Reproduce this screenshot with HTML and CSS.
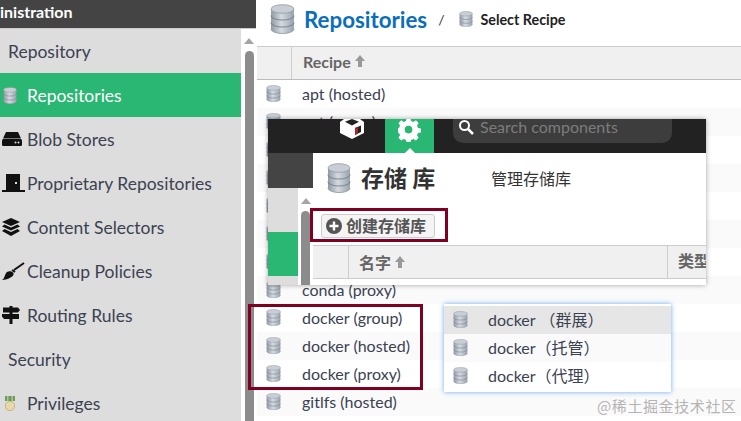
FILE: index.html
```html
<!DOCTYPE html>
<html lang="en">
<head>
<meta charset="utf-8">
<title>Repositories</title>
<link rel="stylesheet" href="styles.css">
</head>
<body>
<svg class="defs" width="0" height="0" aria-hidden="true">
  <defs>
    <linearGradient id="dbg" x1="0" y1="0" x2="1" y2="0">
      <stop offset="0" stop-color="#8f99a5"/>
      <stop offset=".45" stop-color="#d5dae0"/>
      <stop offset="1" stop-color="#98a2ad"/>
    </linearGradient>
    <symbol id="db" viewBox="0 0 24 30" preserveAspectRatio="none">
      <path d="M1 5v20c0 2.500 5 4.500 11 4.500s11-2 11-4.500V5z" fill="url(#dbg)"/>
      <ellipse cx="12" cy="5" rx="11" ry="4.300" fill="#c9ced5" stroke="#8f99a5" stroke-width=".8"/>
      <path d="M1 11.500c0 2.500 5 4.500 11 4.500s11-2 11-4.500M1 18.500c0 2.500 5 4.500 11 4.500s11-2 11-4.500" fill="none" stroke="#7f8994" stroke-width="1.100"/>
      <path d="M1 25c0 2.500 5 4.500 11 4.500s11-2 11-4.500" fill="none" stroke="#8d969f" stroke-width=".8"/>
    </symbol>
    <symbol id="up" viewBox="0 0 10 12">
      <path d="M5 0l5 6H7v6H3V6H0z" fill="#999"/>
    </symbol>
  </defs>
</svg>

<div class="app">
  <aside class="side">
    <div class="side-title">inistration</div>
    <div class="side-body">
      <nav class="menu">
        <div class="menu-item group">Repository</div>
        <div class="menu-item active"><svg class="mi-icon db-i"><use href="#db"/></svg>Repositories</div>
        <div class="menu-item"><svg class="mi-icon blob" viewBox="0 0 20 14"><path d="M4 0h12l3 6.500H1z" fill="#111"/><rect x="0" y="7" width="20" height="7" rx="1.500" fill="#111"/><circle cx="13.500" cy="10.500" r="1" fill="#ddd"/><circle cx="16.500" cy="10.500" r="1" fill="#ddd"/></svg>Blob Stores</div>
        <div class="menu-item"><svg class="mi-icon door" viewBox="0 0 23 18"><path d="M4 0h14v16H4z" fill="#111"/><rect x="0" y="16" width="23" height="2" fill="#111"/><rect x="13" y="8" width="2" height="2" fill="#ddd"/></svg>Proprietary Repositories</div>
        <div class="menu-item"><svg class="mi-icon" viewBox="0 0 18 18"><path d="M9 0l9 4-9 4-9-4z" fill="#111"/><path d="M2.500 6.500L9 9.500l6.500-3L18 8.500l-9 4-9-4z" fill="#111"/><path d="M2.500 11L9 14l6.500-3 2.500 2-9 5-9-5z" fill="#111"/></svg>Content Selectors</div>
        <div class="menu-item"><svg class="mi-icon wide" viewBox="0 0 23 18"><path d="M0 18c3-1.500 2.500-6 5-8 2-1.500 5-1 6.500 1 .5 2-1 3.500-3 4.500-2 1.500-5 2.500-8.500 2.500z" fill="#111"/><path d="M10 8l3 2" stroke="#111" stroke-width="2"/><path d="M12 8l10-7" stroke="#111" stroke-width="2" fill="none"/></svg>Cleanup Policies</div>
        <div class="menu-item"><svg class="mi-icon" viewBox="0 0 18 18"><rect x="7.500" y="0" width="3" height="18" fill="#111"/><path d="M1 1.500h15l2 2.500-2 2.500H1z" fill="#111"/><path d="M0 8h17v5H2l-2-2.500z" fill="#111"/></svg>Routing Rules</div>
        <div class="menu-item group">Security</div>
        <div class="menu-item"><svg class="mi-icon medal" viewBox="0 0 10 15"><path d="M0 0h10v5H0z" fill="#6f9a5c"/><path d="M2 0h1.500v5H2zM6.500 0H8v5H6.500z" fill="#a9c99a"/><circle cx="5" cy="10" r="4.700" fill="#e8d9a8" stroke="#b7a36b" stroke-width=".7"/></svg>Privileges</div>
      </nav>
      <div class="scroll">
        <span class="scroll-up"></span>
        <span class="scroll-thumb"></span>
      </div>
    </div>
  </aside>

  <main class="main">
    <header class="head">
      <svg class="head-icon"><use href="#db"/></svg>
      <h1 class="head-title">Repositories</h1>
      <span class="crumb-sep">/</span>
      <svg class="crumb-icon"><use href="#db"/></svg>
      <span class="crumb">Select Recipe</span>
    </header>
    <div class="thead">
      <div class="th-blank"></div>
      <div class="th">Recipe<svg class="arrow"><use href="#up"/></svg></div>
    </div>
    <div class="rows">
      <div class="row"><svg class="r-icon"><use href="#db"/></svg>apt (hosted)</div>
      <div class="row"><svg class="r-icon"><use href="#db"/></svg>apt (proxy)</div>
      <div class="row"><svg class="r-icon"><use href="#db"/></svg></div>
      <div class="row"><svg class="r-icon"><use href="#db"/></svg></div>
      <div class="row"><svg class="r-icon"><use href="#db"/></svg></div>
      <div class="row"><svg class="r-icon"><use href="#db"/></svg></div>
      <div class="row"><svg class="r-icon"><use href="#db"/></svg></div>
      <div class="row"><svg class="r-icon"><use href="#db"/></svg>conda (proxy)</div>
      <div class="row"><svg class="r-icon"><use href="#db"/></svg>docker (group)</div>
      <div class="row"><svg class="r-icon"><use href="#db"/></svg>docker (hosted)</div>
      <div class="row"><svg class="r-icon"><use href="#db"/></svg>docker (proxy)</div>
      <div class="row"><svg class="r-icon"><use href="#db"/></svg>gitlfs (hosted)</div>
    </div>
  </main>
</div>

<section class="shot">
  <div class="shot-top">
    <svg class="cube" viewBox="0 0 26 20"><path d="M1 3l4-3h16l4 3v11l-12 6-12-6z" fill="#fff"/><path d="M6 2.800L13 0l7 2.800-7 3.700z" fill="#222"/><path d="M16 9l6-2.500V13l-6 3z" fill="#222"/><path d="M16 9l3-1.300v6.800l-3 1.500z" fill="#a3262a"/></svg>
    <div class="gear-tab">
      <svg class="gear" viewBox="0 0 24 24"><path fill="#fff" fill-rule="evenodd" d="M10 1h4l.6 3 2.500 1 2.600-1.600 2.800 2.800L20.900 8.800l1 2.500 3 .7v4l-3 .6-1 2.400 1.600 2.600-2.800 2.800-2.600-1.600-2.500 1-.6 3h-4l-.6-3-2.500-1-2.600 1.600-2.800-2.800 1.600-2.600-1-2.400-3-.6v-4l3-.7 1-2.500-1.600-2.600 2.800-2.800L6.900 5l2.500-1zM12 9a4 4 0 1 0 0 8 4 4 0 0 0 0-8z" transform="translate(-1 -2)"/></svg>
      <span class="gear-tip"></span>
    </div>
    <div class="search">
      <svg class="search-icon" viewBox="0 0 16 16"><circle cx="6.500" cy="6.500" r="4.500" fill="none" stroke="#fff" stroke-width="2"/><path d="M10 10l5 5" stroke="#fff" stroke-width="2.500"/></svg>
      <span>Search components</span>
    </div>
  </div>
  <div class="shot-body">
    <div class="shot-side">
      <div class="ss-title"></div>
      <div class="ss-body">
        <div class="ss-menu">
          <div class="ss-item"></div>
          <div class="ss-item on"></div>
          <div class="ss-item"></div>
        </div>
        <div class="ss-scroll">
          <span class="scroll-up"></span>
          <span class="ss-thumb"></span>
        </div>
      </div>
    </div>
    <div class="shot-main">
      <div class="shot-head">
        <svg class="shot-icon"><use href="#db"/></svg>
        <span class="shot-title">存储 库</span>
        <span class="shot-sub">管理存储库</span>
      </div>
      <div class="shot-tools">
        <button class="create" type="button"><svg class="plus" viewBox="0 0 16 16"><circle cx="8" cy="8" r="8" fill="#555"/><path d="M8 3.500v9M3.500 8h9" stroke="#fff" stroke-width="2.400"/></svg><span class="create-label">创建存储库</span></button>
      </div>
      <div class="shot-thead">
        <div class="st-blank"></div>
        <div class="st-name">名字<svg class="arrow"><use href="#up"/></svg></div>
        <div class="st-type">类型</div>
      </div>
    </div>
  </div>
  <span class="mark mark-a"></span>
</section>

<span class="mark mark-b"></span>

<div class="mini">
  <div class="mini-row sel"><svg class="r-icon"><use href="#db"/></svg>docker （群展）</div>
  <div class="mini-row alt"><svg class="r-icon"><use href="#db"/></svg>docker（托管）</div>
  <div class="mini-row"><svg class="r-icon"><use href="#db"/></svg>docker（代理）</div>
</div>

<div class="water">@稀土掘金技术社区</div>
</body>
</html>
```

FILE: styles.css
```css
* { box-sizing: border-box; }
html, body { margin: 0; padding: 0; }
body {
  width: 741px;
  height: 421px;
  overflow: hidden;
  position: relative;
  background: #fff;
  font-family: Lato, "Noto Sans CJK SC", sans-serif;
  color: #3b4252;
}
.defs { position: absolute; }

.app { display: flex; height: 421px; }

/* left admin menu */
.side { width: 256px; flex: none; display: flex; flex-direction: column; }
.side-title {
  height: 28px;
  background: #444;
  color: #fff;
  font-weight: 700;
  font-size: 16px;
  line-height: 23px;
  flex: none;
}
.side-body { flex: 1; display: flex; border-top: 1px solid #ccc; min-height: 0; }
.menu { width: 241px; background: #ddd; flex: none; }
.menu-item {
  height: 44px;
  display: flex;
  align-items: center;
  font-size: 17.500px;
  white-space: nowrap;
  padding: 0 0 0 27px;
  position: relative;
}
.menu-item.group { padding-left: 8px; }
.menu-item.active { background: #2ab673; color: #fff; }
.mi-icon { position: absolute; left: 2px; top: 13px; width: 18px; height: 18px; }
.mi-icon.db-i { left: 3px; top: 14px; width: 14px; height: 17px; }
.mi-icon.blob { top: 15px; width: 20px; height: 14px; }
.mi-icon.door { width: 23px; height: 18px; }
.mi-icon.wide { width: 23px; height: 18px; }
.mi-icon.medal { left: 5px; top: 15px; width: 10px; height: 15px; }
.scroll { flex: 1; position: relative; background: #fff; padding: 9px 3px 0; display: flex; flex-direction: column; align-items: center; }
.scroll-up { width: 0; height: 0; border: 5px solid transparent; border-top: 0; border-bottom: 6px solid #a5a5a5; flex: none; }
.scroll-thumb { display: block; margin-top: 7px; width: 9px; flex: 1; background: #8c8c8c; border-radius: 5px 5px 0 0; }

/* main */
.main { flex: 1; min-width: 0; }
.head { height: 46px; display: flex; align-items: center; padding: 0 0 8px 14px; }
.head-icon { width: 25px; height: 30px; flex: none; margin-right: 9px; }
.head-title { margin: 0; font-size: 22.300px; font-weight: 700; color: #0a6ebd; }
.crumb-sep { margin-left: 11px; font-size: 14px; color: #333; }
.crumb-icon { width: 14px; height: 16px; margin: 0 7px 0 15px; flex: none; }
.crumb { font-size: 14.300px; font-weight: 700; color: #222; }

.thead { height: 34px; display: flex; background: #f0f0f0; border-top: 1px solid #ccc; border-bottom: 1px solid #bbb; }
.th-blank { width: 36px; border-right: 1px solid #ccc; flex: none; }
.th { padding: 0 0 4px 11px; font-size: 16px; font-weight: 700; color: #666; display: flex; align-items: center; }
.arrow { width: 10px; height: 12px; margin-left: 4px; flex: none; }

.row {
  height: 28px;
  display: flex;
  align-items: center;
  font-size: 16px;
  padding: 0 0 1px 10px;
  background: #fff;
}
.row:nth-child(even) { background: #fafafa; }
.r-icon { width: 15px; height: 17px; flex: none; margin-right: 21px; }

/* pasted screenshot */
.shot {
  position: absolute;
  left: 268px;
  top: 119px;
  width: 438px;
  height: 166px;
  background: #fff;
  box-shadow: 0 0 5px rgba(0, 0, 0, .35);
}
.shot-top { height: 34px; background: #222; display: flex; position: relative; }
.cube { width: 26px; height: 20px; margin-left: 71px; flex: none; }
.gear-tab { width: 49px; height: 34px; margin-left: 20px; background: #2ab673; position: relative; flex: none; display: flex; justify-content: center; }
.gear { width: 23px; height: 23px; }
.gear-tip { position: absolute; left: 20px; bottom: 0; width: 0; height: 0; border: 5px solid transparent; border-top: 0; border-bottom: 5px solid #fff; }
.search {
  width: 219px;
  height: 24px;
  margin-left: 19px;
  padding: 0 0 9px 5px;
  background: #3d3d3d;
  border-radius: 0 0 10px 10px;
  display: flex;
  align-items: center;
  color: #7c7c7c;
  font-size: 16px;
}
.search-icon { width: 16px; height: 16px; margin-right: 6px; flex: none; }

.shot-body { display: flex; height: 132px; }
.shot-side { width: 45px; flex: none; display: flex; flex-direction: column; }
.ss-title { height: 35px; background: #444; flex: none; }
.ss-body { flex: 1; display: flex; }
.ss-menu { width: 30px; background: #ddd; flex: none; }
.ss-item { height: 44px; }
.ss-item.on { background: #2ab673; }
.ss-item:last-child { height: 9px; }
.ss-scroll { flex: 1; display: flex; flex-direction: column; align-items: center; padding-top: 10px; }
.ss-thumb { display: block; margin-top: 7px; width: 9px; flex: 1; background: #8c8c8c; border-radius: 5px 5px 0 0; }

.shot-main { flex: 1; min-width: 0; overflow: hidden; }
.shot-head { height: 55px; display: flex; align-items: center; padding: 0 0 5px 14px; }
.shot-icon { width: 24px; height: 30px; margin-right: 10px; flex: none; }
.shot-title { font-size: 23px; font-weight: 700; color: #333; width: 130px; flex: none; font-family: "Noto Sans CJK SC", sans-serif; line-height: 30px; padding-bottom: 3px; }
.shot-sub { font-size: 16px; color: #333; font-family: "Noto Sans CJK SC", sans-serif; }
.shot-tools { height: 37px; padding: 6px 0 0 8px; }
.create {
  display: flex;
  align-items: center;
  width: 114px;
  height: 24px;
  padding: 0 0 0 4px;
  background: #f4f4f4;
  border: 1px solid #ccc;
  border-radius: 3px;
  font: 700 16px/20px "Noto Sans CJK SC", sans-serif;
  color: #555;
}
.create-label { padding-bottom: 3px; }
.plus { width: 16px; height: 16px; margin-right: 4px; flex: none; }
.shot-thead { height: 34px; display: flex; background: #f0f0f0; border-top: 1px solid #ccc; border-bottom: 1px solid #ccc; font-weight: 700; font-size: 16px; color: #666; line-height: 29px; font-family: "Noto Sans CJK SC", sans-serif; }
.st-blank { width: 36px; flex: none; border-right: 1px solid #ccc; }
.st-name { width: 319px; flex: none; padding-left: 10px; border-right: 1px solid #ccc; display: flex; align-items: center; }
.st-type { padding-left: 10px; white-space: nowrap; }

/* red annotation boxes */
.mark { position: absolute; border: 3px solid #7f0020; pointer-events: none; }
.mark-a { left: 42px; top: 89px; width: 138px; height: 34px; }
.mark-b { left: 248px; top: 304px; width: 175px; height: 86px; }

/* translated list */
.mini {
  position: absolute;
  left: 444px;
  top: 304px;
  width: 227px;
  height: 88px;
  padding-top: 2px;
  background: #fff;
  box-shadow: 0 0 5px #6fa8ee;
}
.mini-row { height: 28px; display: flex; align-items: center; padding: 0 0 2px 9px; font-size: 16px; white-space: nowrap; }
.mini-row .r-icon { margin-right: 20px; }
.mini-row.sel { background: #e6e6e6; }
.mini-row.alt { background: #fafafa; }

.water {
  position: absolute;
  left: 597px;
  top: 395px;
  font: 15px/22px "Noto Sans CJK SC", sans-serif;
  color: #b4b4b4;
  letter-spacing: .6px;
  white-space: nowrap;
}
```
